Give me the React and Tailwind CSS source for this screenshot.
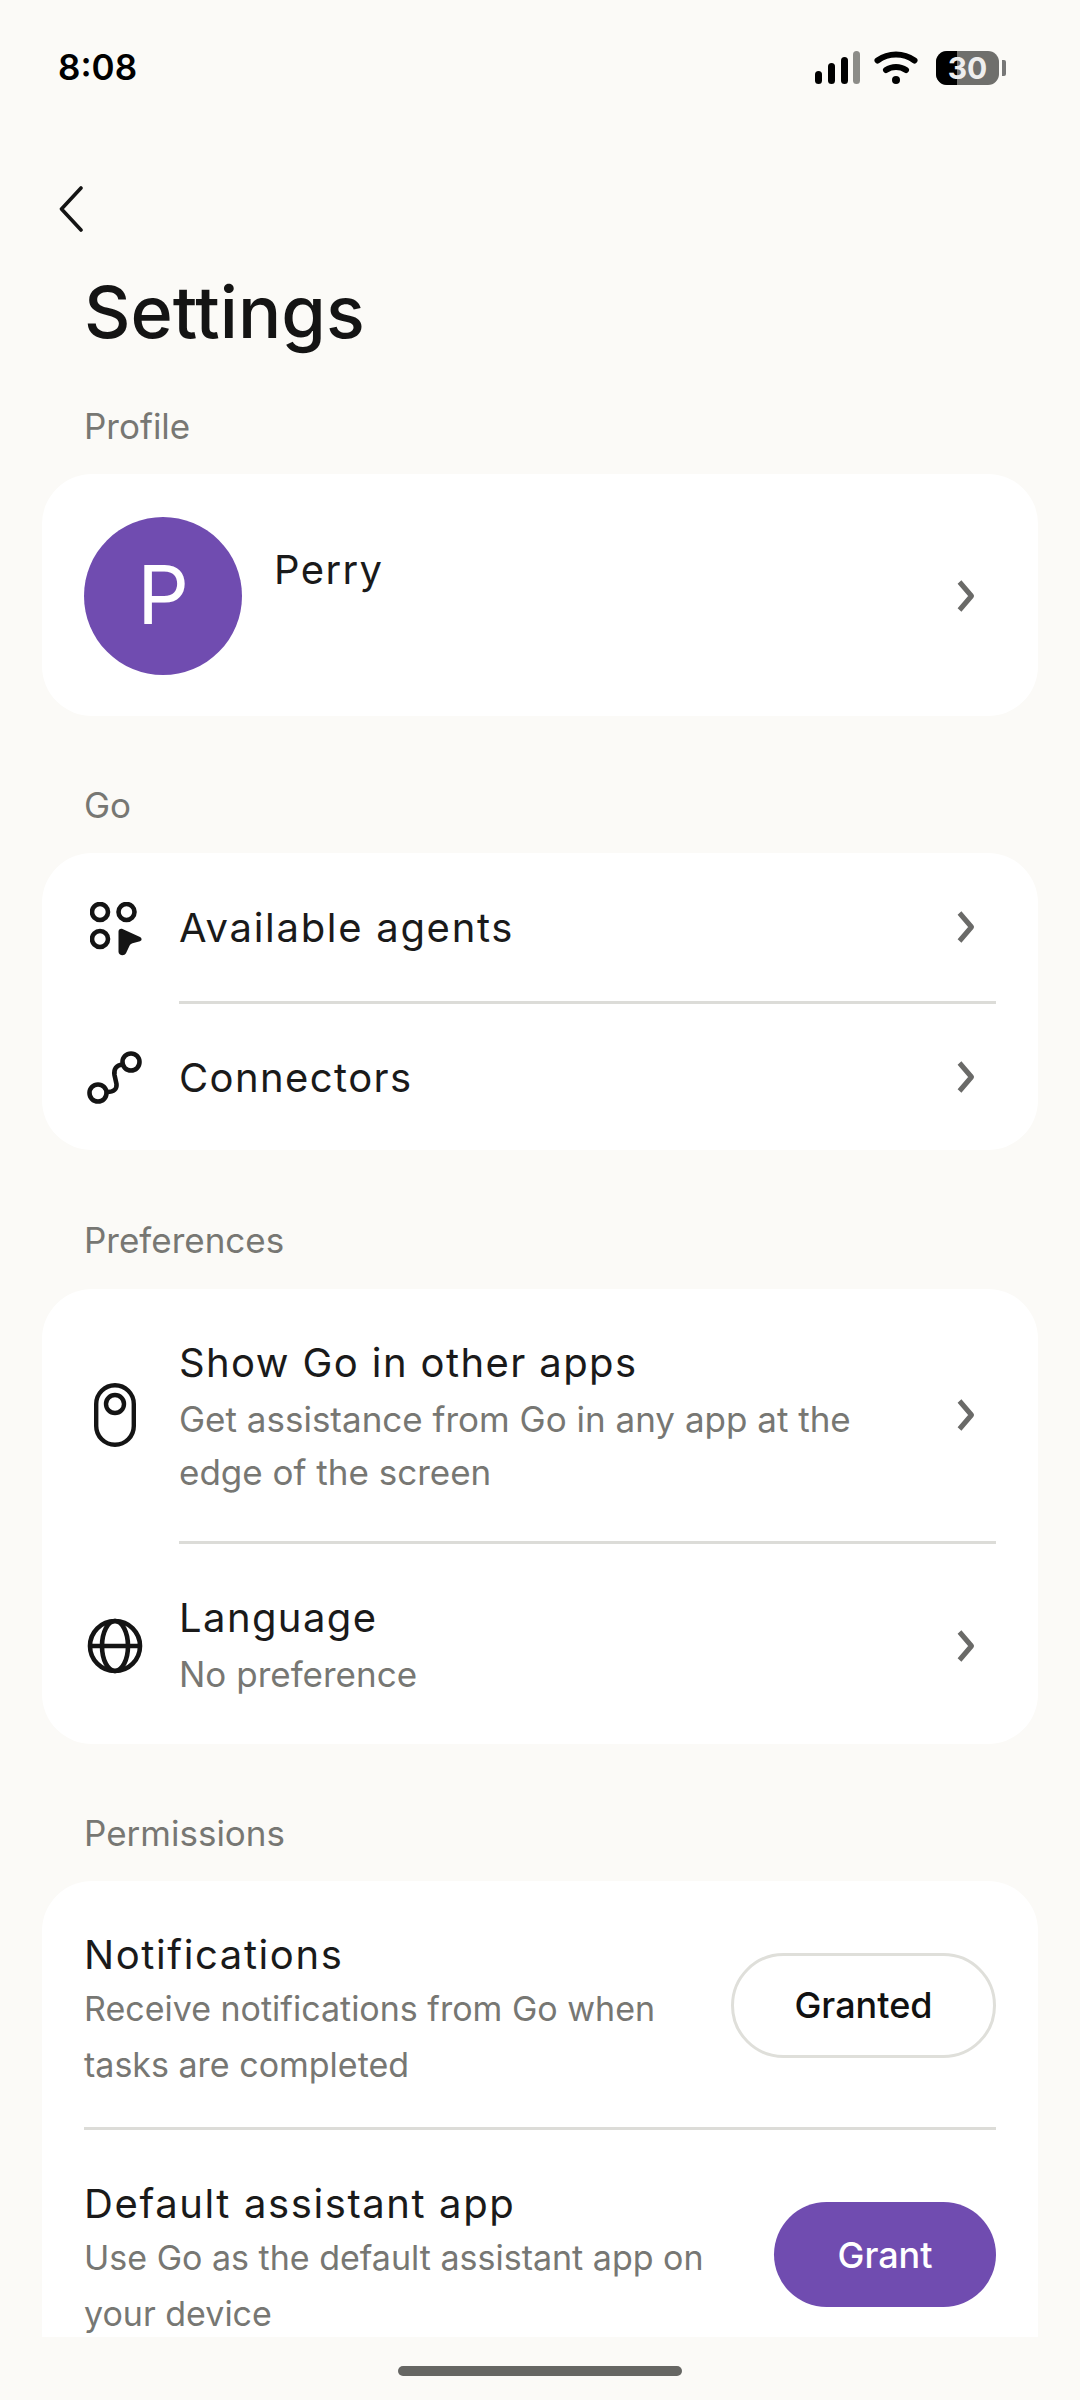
import React from 'react';

const sans = 'font-["Inter",sans-serif]';

function Chevron() {
  return (
    <svg width="20" height="34" viewBox="0 0 20 34" fill="none" className="shrink-0">
      <path d="M3.500 3l12 14-12 14" stroke="#6a6a68" strokeWidth="5" strokeLinejoin="round" />
    </svg>
  );
}

function AgentsIcon() {
  return (
    <svg width="52" height="54" viewBox="0 0 52 54" fill="none" className="mt-[3px] ml-[2px]">
      <circle cx="10" cy="10" r="8" stroke="#141414" strokeWidth="4.600" />
      <circle cx="36.500" cy="10" r="8" stroke="#141414" strokeWidth="4.600" />
      <circle cx="10" cy="37" r="8" stroke="#141414" strokeWidth="4.600" />
      <path d="M28.500 29.500c0-2 2-3.500 4-2.500l17.500 8c2 1 2.200 3.500 0 4.200l-7.500 2c-1.500.4-2.500 1.300-3 2.500l-3.500 7.500c-1.500 3-7.500 2.500-7.500-1.500z" fill="#141414" />
    </svg>
  );
}

function ConnectorIcon() {
  return (
    <svg width="56" height="54" viewBox="0 0 56 54" fill="none" className="mt-[2px]">
      <circle cx="11" cy="42" r="8.500" stroke="#141414" strokeWidth="4.600" />
      <circle cx="44" cy="11" r="8.500" stroke="#141414" strokeWidth="4.600" />
      <path d="M20 41c7 0 10-3 9.500-8l-2-9c-1-6 2-10 8-10.500" stroke="#141414" strokeWidth="4.600" strokeLinecap="round" />
    </svg>
  );
}

function EdgeIcon() {
  return (
    <svg width="42" height="64" viewBox="0 0 42 64" fill="none">
      <rect x="2.200" y="2.200" width="37.600" height="59.600" rx="18.800" stroke="#141414" strokeWidth="4.400" />
      <circle cx="21" cy="21" r="9" stroke="#141414" strokeWidth="4.400" />
    </svg>
  );
}

function GlobeIcon() {
  return (
    <svg width="56" height="56" viewBox="0 0 56 56" fill="none" stroke="#141414" strokeWidth="4.600">
      <circle cx="28" cy="28" r="25" />
      <ellipse cx="28" cy="28" rx="13" ry="25" />
      <path d="M3 28h50" />
    </svg>
  );
}

function SectionLabel({ children, className }) {
  return <div className={`pl-[84px] text-[35px] leading-[44px] text-[#777773] ${className}`}>{children}</div>;
}

function NavRow({ icon, title, subtitle, className, titleClass, textClass }) {
  return (
    <div className={`flex items-center ${className}`}>
      <div className="w-[137px] pl-[9px] shrink-0 flex justify-center">{icon}</div>
      <div className={`flex-1 min-w-0 ${textClass}`}>
        <div className={`text-[40px] leading-[50px] text-[#1a1a1a] ${titleClass || 'tracking-[1.400px]'}`}>{title}</div>
        {subtitle && <div className="text-[35px] leading-[53px] mt-[5px] text-[#777773] w-[720px]">{subtitle}</div>}
      </div>
      <div className="pr-[62px]"><Chevron /></div>
    </div>
  );
}

function Divider({ inset }) {
  return <div className={`h-[3px] bg-[#dcdcd8] mr-[42px] ${inset ? 'ml-[137px]' : 'ml-[42px]'}`} />;
}

function PermissionRow({ title, lines, action, primary, className }) {
  return (
    <div className={`flex items-center pl-[42px] pr-[42px] ${className}`}>
      <div className="flex-1 pt-[12px]">
        <div className="text-[40px] leading-[50px] tracking-[1.600px] text-[#1a1a1a]">{title}</div>
        <div className="text-[34px] leading-[56px] text-[#777773] mt-[1px]">
          {lines.map((l) => <div key={l}>{l}</div>)}
        </div>
      </div>
      <div
        className={`h-[105px] rounded-full flex items-center justify-center text-[36px] font-medium ${
          primary ? 'w-[222px] bg-[#704cb0] text-white' : 'w-[265px] border-[3px] border-[#dfdfda] text-[#111]'
        }`}
      >
        {action}
      </div>
    </div>
  );
}

export default function App() {
  return (
    <div className={`relative h-[2400px] w-[1080px] overflow-hidden bg-[#fbfaf7] ${sans}`}>
      {/* status bar */}
      <div className="h-[134px] pt-[45px] pl-[58px] pr-[74px] flex justify-between items-start">
        <span className="text-[35px] leading-[44px] font-semibold text-black">8:08</span>
        <div className="flex items-center gap-[13px] mt-[6px]">
          <svg width="46" height="34" viewBox="0 0 46 34">
            <rect x="0" y="20" width="7" height="13" rx="3.500" fill="#000" />
            <rect x="13" y="12" width="7" height="21" rx="3.500" fill="#000" />
            <rect x="26" y="6" width="7" height="27" rx="3.500" fill="#000" />
            <rect x="38" y="0" width="7" height="33" rx="3.500" fill="#8c8c88" />
          </svg>
          <svg width="44" height="34" viewBox="0 0 44 34" fill="none" stroke="#000" strokeWidth="6" strokeLinecap="round">
            <path d="M3.500 9.500c11-8 26-8 37 0" />
            <path d="M12 19c6-4 14-4 20 0" />
            <circle cx="22" cy="29" r="4" fill="#000" stroke="none" />
          </svg>
          <div className="relative flex items-center ml-[5px]">
            <div className="relative w-[63px] h-[34px] rounded-[11px] overflow-hidden bg-[#6f6f6c] flex items-center justify-center">
              <div className="absolute left-0 top-0 bottom-0 w-[21px] bg-black" />
              <span className="relative text-[30px] leading-none font-bold text-[#eeeeee]">30</span>
            </div>
            <div className="ml-[3px] w-[4px] h-[16px] rounded-r-[2px] bg-[#777]" />
          </div>
        </div>
      </div>

      {/* back + title */}
      <div className="pl-[59px] pt-[52px]">
        <svg width="24" height="46" viewBox="0 0 24 46" fill="none" className="block">
          <path d="M22 2L2.500 23 22 44" stroke="#141414" strokeWidth="3.600" strokeLinecap="round" strokeLinejoin="round" />
        </svg>
      </div>
      <h1 className="pl-[84px] mt-[38px] text-[72px] leading-[84px] font-medium text-[#141414]">Settings</h1>

      {/* list is cut off above the nav bar */}
      <div className="mt-[50px] h-[1933px] overflow-hidden">
        <SectionLabel>Profile</SectionLabel>
        <div className="mx-[42px] mt-[26px] h-[242px] pt-[2px] rounded-[50px] bg-white flex items-center pl-[42px]">
          <div className="w-[158px] h-[158px] rounded-full bg-[#704cb0] flex items-center justify-center text-[81px] text-white shrink-0">P</div>
          <div className="flex-1 self-start ml-[32px] mt-[69px] text-[40px] leading-[50px] tracking-[1.400px] text-[#1a1a1a]">Perry</div>
          <div className="pr-[62px]"><Chevron /></div>
        </div>

        <SectionLabel className="mt-[67px]">Go</SectionLabel>
        <div className="mx-[42px] mt-[26px] rounded-[50px] bg-white">
          <NavRow icon={<AgentsIcon />} title="Available agents" titleClass="tracking-[1.700px]" textClass="pt-[2px]" className="h-[148px]" />
          <Divider inset />
          <NavRow icon={<ConnectorIcon />} title="Connectors" textClass="pt-[2px]" className="h-[146px]" />
        </div>

        <SectionLabel className="mt-[68px]">Preferences</SectionLabel>
        <div className="mx-[42px] mt-[27px] rounded-[50px] bg-white">
          <NavRow
            icon={<EdgeIcon />}
            title="Show Go in other apps"
            subtitle="Get assistance from Go in any app at the edge of the screen"
            textClass="pt-[6px]"
            className="h-[252px]"
          />
          <Divider inset />
          <NavRow icon={<GlobeIcon />} title="Language" subtitle="No preference" textClass="pt-[3px]" className="h-[200px] pt-[3px]" />
        </div>

        <SectionLabel className="mt-[67px]">Permissions</SectionLabel>
        <div className="mx-[42px] mt-[26px] rounded-t-[50px] bg-white h-[500px]">
          <PermissionRow
            title="Notifications"
            lines={['Receive notifications from Go when', 'tasks are completed']}
            action="Granted"
            className="h-[246px] pt-[2px]"
          />
          <Divider />
          <PermissionRow
            title="Default assistant app"
            lines={['Use Go as the default assistant app on', 'your device']}
            action="Grant"
            primary
            className="h-[247px] pt-[2px]"
          />
        </div>
      </div>

      {/* home indicator */}
      <div className="absolute bottom-[24px] left-[398px] w-[284px] h-[10px] rounded-full bg-[#666663]" />
    </div>
  );
}
